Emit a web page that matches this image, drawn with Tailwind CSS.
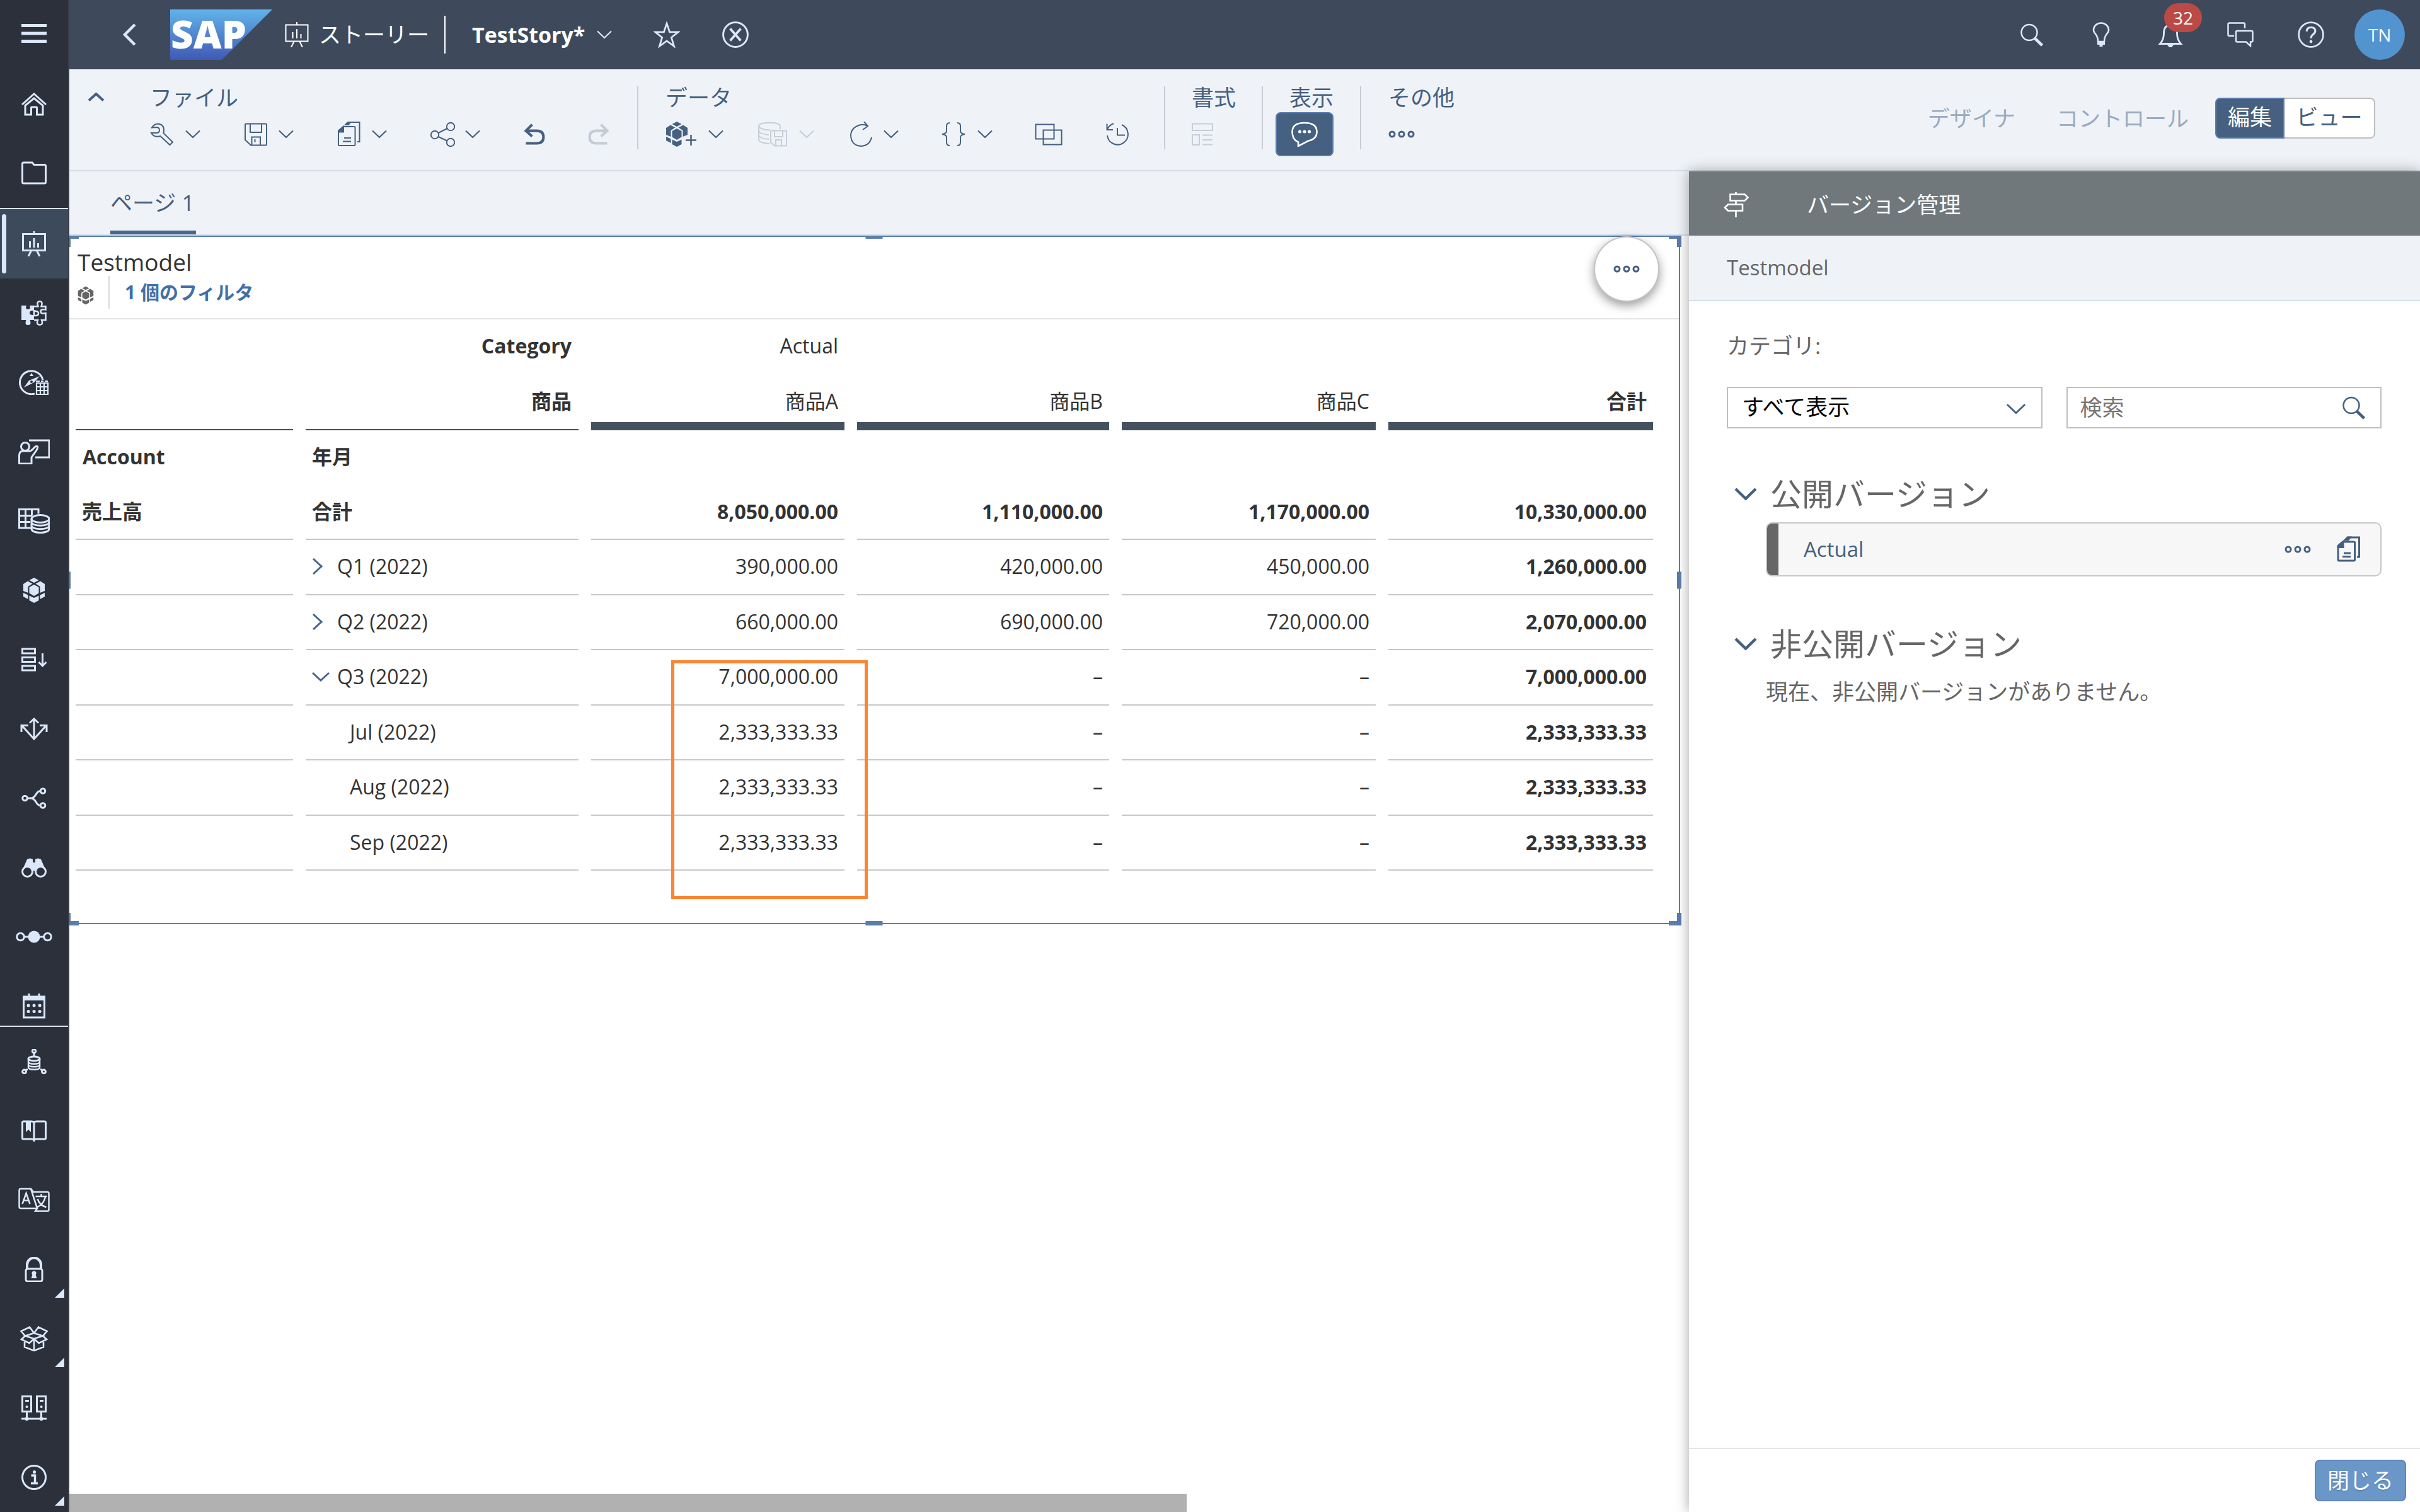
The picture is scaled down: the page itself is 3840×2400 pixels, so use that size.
<!DOCTYPE html>
<html lang="ja">
<head>
<meta charset="utf-8">
<title>TestStory</title>
<script src="https://cdn.jsdelivr.net/npm/@tailwindcss/browser@4"></script>
</head>
<body class="bg-white font-['Open_Sans','Noto_Sans_CJK_JP',sans-serif] text-[#333]">

<svg class="hidden" aria-hidden="true">
  <defs>
    <symbol id="menu" viewBox="0 0 40 40"><path d="M0 5.500h40M0 18h40M0 30.500h40" stroke-width="5"/></symbol>
    <symbol id="home" viewBox="0 0 40 40"><path d="M1 21 20 4l19 17M6 22.500 20 11l14 11.500V37h-9.500V26q0-1-1-1h-7q-1 0-1 1v11H6z"/></symbol>
    <symbol id="folder" viewBox="0 0 40 40"><path d="M1.500 5q0-2 2-2H17l3 3.500h16.500q2 0 2 2V34q0 2-2 2h-33q-2 0-2-2z"/></symbol>
    <symbol id="story" viewBox="0 0 40 40"><path d="M2.500 4.500h35v26h-35zM20 0v4M15.500 31l-4.500 9M24.500 31l4.500 9M13.500 16v10M20 11v15M26.500 19v7"/></symbol>
    <symbol id="puzzle" viewBox="0 0 40 40"><path d="M0 8h8q-2.500 6 2.500 6t2.500-6H20v8h-2q-5 0-5 3.500t5 3.500h2v8h-6.500q3 8-3 8t-3-8H0z" fill="currentColor" stroke="none"/><path d="M20 9.500h6.500q-3-8 2.500-8t2.500 8h7v5q-8-1.500-8 3t8 2.500v11H32q3 7.500-3 7.500t-3-7.500h-6M20 16v8h3q4 0 4-3.500t-4-3.500z" stroke-width="2.500"/></symbol>
    <symbol id="compass" viewBox="0 0 48 40"><path d="M25 38A18.500 18.500 0 1 1 38 16" stroke-width="3"/><path d="M8 28 16 17l17-7-9 10-16 8zM17 10l3-5 3 5z" fill="currentColor" stroke="none"/><circle cx="20" cy="19" r="2" fill="#2b303a" stroke="none"/><path d="M28 21h18v18H28zM34 21v18M40 21v18M28 27h18M28 33h18M27 18h6M35 18h4M41 18h5" stroke-width="2.200"/></symbol>
    <symbol id="teacher" viewBox="0 0 50 40"><path d="M17 2h32v27H27"/><circle cx="11" cy="12" r="6.500"/><path d="M1.500 39V26q0-7 6-7h10q3 0 6-3.500 4-5 6.500-4 2 1.500-1 6L21 29v10z"/></symbol>
    <symbol id="griddb" viewBox="0 0 50 40"><path d="M20 31H1.500V1.500H32v7M1.500 11.500H22M1.500 21.500H19M11.500 1.500V31M21.500 1.500v10"/><ellipse cx="35" cy="16.500" rx="14" ry="6"/><path d="M21 16.500v16c0 8 28 8 28 0v-16M21 22c0 7 28 7 28 0M21 27.500c0 7 28 7 28 0"/></symbol>
    <symbol id="cube" viewBox="0 0 36 40"><g fill="currentColor" stroke="none"><path d="M18 0 25.500 4 18 8 10.500 4zM8 5.500l7.500 4-7 4.500v10L1 21V10zM28 5.500l-7.500 4 7 4.500v10l7.500-3V10zM18 11l7.500 4v9.500L18 29l-7.500-4.500V15zM1 24l7.500 3.500V34L1 30zM35 24l-7.500 3.500V34L35 30zM10.500 28.500 18 32l7.500-3.500V36L18 40l-7.500-4z"/></g></symbol>
    <symbol id="sort" viewBox="0 0 40 40"><path d="M1.500 3h20v7h-20zM1.500 16.500h20v7h-20zM1.500 30h20v7h-20zM33.500 10v19M27.500 24l6 6 6-6"/></symbol>
    <symbol id="arrows" viewBox="0 0 44 40"><path d="M22 4v32M15 10.500 22 4l7 6.500M2 25V14.500h11M42 25V14.500H31M2.500 14.500 22 36l19.500-21.500"/></symbol>
    <symbol id="branch" viewBox="0 0 40 40"><circle cx="5.500" cy="20" r="3.800"/><circle cx="34" cy="8.500" r="3.800"/><circle cx="34" cy="31.500" r="3.800"/><path d="M9.500 20h6c8 0 7-11.500 14.500-11.500M15.500 20c8 0 7 11.500 14.500 11.500"/></symbol>
    <symbol id="binoculars" viewBox="0 0 40 40"><path d="M1.500 24 9 7q5-3 9 0v5h4V7q4-3 9 0l7.500 17-6-4q-9 0-10 5h-5q-1-5-10-5z" fill="currentColor" stroke="none"/><circle cx="9.500" cy="26.500" r="8"/><circle cx="30.500" cy="26.500" r="8"/></symbol>
    <symbol id="flow" viewBox="0 0 58 40"><circle cx="7.500" cy="20" r="5.800"/><circle cx="50.500" cy="20" r="5.800"/><circle cx="29" cy="20" r="9.500" fill="currentColor" stroke="none"/><path d="M14 20h30"/></symbol>
    <symbol id="calendar" viewBox="0 0 40 40"><path d="M3.500 5h33v33h-33zM3.500 8h33M12 0v8M28 0v8"/><path d="M3 4h34v7H3z" fill="currentColor" stroke="none"/><path d="M11 19h.1M20 19h.1M29 19h.1M11 28.500h.1M20 28.500h.1M29 28.500h.1" stroke-width="5" stroke-linecap="round"/></symbol>
    <symbol id="netdb" viewBox="0 0 40 40"><circle cx="20" cy="3.500" r="2.700"/><circle cx="4.500" cy="36" r="2.900"/><circle cx="35.500" cy="36" r="2.900"/><path d="M20 6v6M7 34l3-2M33 34l-3-2"/><ellipse cx="20" cy="15.500" rx="9" ry="3.500"/><path d="M11 15.500V29c0 5 18 5 18 0V15.500M11 20c0 5 18 5 18 0M11 24.500c0 5 18 5 18 0" stroke-width="2.500"/></symbol>
    <symbol id="book" viewBox="0 0 40 40"><path d="M20 35q-1-2-4-2H3q-1.500 0-1.500-1.500V7Q1.500 5 3 5h13q4 0 4 2.500 0-2.500 4-2.500h13q1.500 0 1.500 2v24.500Q38.500 33 37 33H24q-3 0-4 2zM20 7v27"/><path d="M7 5h8v17l-4-4-4 4z" fill="currentColor" stroke="none"/></symbol>
    <symbol id="translate" viewBox="0 0 50 40"><path d="M20 2H4Q1.500 2 1.500 4.500v26Q1.500 33 4 33h26zM20 2l4 5h22q2.500 0 2.500 2.500V35q0 2.500-2.500 2.500H27L30 33M20 2l10 31M6.500 26 12.500 9 18.500 26M8.500 20.500h8M27.500 14h18M36.500 10v4M30.500 18q4 11 14 13M43 15q-3 12-13 16" stroke-width="2.500"/></symbol>
    <symbol id="lock" viewBox="0 0 40 40"><path d="M9 19v-6.500a11 11 0 0 1 22 0V19" stroke-width="4"/><rect x="7" y="19" width="26" height="20" rx="3"/><circle cx="20" cy="26" r="3.500" fill="currentColor" stroke="none"/><path d="M18 27h4l2.500 7h-9z" fill="currentColor" stroke="none"/></symbol>
    <symbol id="box" viewBox="0 0 44 40"><path d="M22 11 8 15.500 22 20l14-4.500zM22 11 15 1.500 1.500 8 8 15.500M22 11l7-9.500L42.500 8 36 15.500M8 15.500 2 21l12.500 6L22 20M36 15.500l6 5.500-12.500 6L22 20M7 25v8l15 6 15-6v-8M22 21v18" stroke-width="2.600"/></symbol>
    <symbol id="servers" viewBox="0 0 40 40"><path d="M1.500 1.500h14v24h-14zM24.500 1.500h14v24h-14zM6 8.500h6M29 8.500h6M8.500 26v10M31.500 26v10M0 37h40"/><path d="M8.500 18h.1M31.500 18h.1" stroke-width="4" stroke-linecap="round"/><path d="M8.500 37h.1M31.500 37h.1" stroke-width="6" stroke-linecap="round"/></symbol>
    <symbol id="info" viewBox="0 0 40 40"><circle cx="20" cy="20" r="18.500"/><path d="M15.500 17h6v11M15 29.500h11" stroke-width="3.500"/><circle cx="20.500" cy="11.500" r="2.600" fill="currentColor" stroke="none"/></symbol>
    <symbol id="corner" viewBox="0 0 15 15"><path d="M15 0v15H0z" fill="currentColor" stroke="none"/></symbol>

    <symbol id="back" viewBox="0 0 22 36"><path d="M20 2 4 18l16 16" stroke-width="4.500"/></symbol>
    <symbol id="down" viewBox="0 0 24 14"><path d="M1 1.500 12 12 23 1.500" stroke-width="2.200"/></symbol>
    <symbol id="downbold" viewBox="0 0 36 20"><path d="M2 2l16 15.500L34 2" stroke-width="4.500"/></symbol>
    <symbol id="star" viewBox="0 0 40 40"><path d="m20 3 4.300 13H37.500L27 24.200 31 37.500 20 29.500 9 37.500l4-13.300L2.500 16h13.200z" stroke-width="2.600"/></symbol>
    <symbol id="close" viewBox="0 0 40 40"><circle cx="20" cy="20" r="18.500" stroke-width="2.800"/><path d="m12 11 16 18M28 11 12 29" stroke-width="3.600"/></symbol>
    <symbol id="search" viewBox="0 0 40 40"><circle cx="16" cy="16.500" r="12.500" stroke-width="2.500"/><path d="m25 26 11.500 11" stroke-width="4.500"/></symbol>
    <symbol id="bulb" viewBox="0 0 40 40"><path d="M15 31q0-7-3.500-11.500Q8 15.500 8 12.500a12 11 0 0 1 24 0q0 3-3.500 7Q25 24 25 31z" stroke-width="2.600"/><path d="M14 30h12v6h-3.500v3h-5v-3H14z" fill="currentColor" stroke="none"/></symbol>
    <symbol id="bell" viewBox="0 0 40 40"><path d="M3.500 34.500Q9.500 28 9.500 18 9.500 5 20 5t10.500 13q0 10 6 16.500z" stroke-width="2.800"/><path d="M14 35h12l-4 5h-4z" fill="currentColor" stroke="none"/></symbol>
    <symbol id="chat" viewBox="0 0 42 40"><path d="M11 22H3.500q-2 0-2-2V3.500q0-2 2-2H26q2 0 2 2V10M16 14h22.500q2 0 2 2v13.500q0 2-2 2H37V38l-7-6.500H16q-2 0-2-2V16q0-2 2-2z" stroke-width="2.500"/></symbol>
    <symbol id="help" viewBox="0 0 40 40"><circle cx="20" cy="20" r="18.500" stroke-width="2.600"/><path d="M13.500 15q0-6 6.500-6t6.500 5.500c0 5-6.500 4.500-6.500 11" stroke-width="3"/><circle cx="20" cy="30.500" r="2.300" fill="currentColor" stroke="none"/></symbol>

    <symbol id="wrench" viewBox="0 0 40 40"><path d="M3 9.500Q7 3.500 13 3.500q9.500 1 9 11.500l-.5 3.500 14.500 14-4.500 4.500-15-14q-10 3-14.500-5h8q5 0 5-4.500T10 9z"/></symbol>
    <symbol id="save" viewBox="0 0 40 40"><path d="M3 5q0-1.500 1.500-1.500h31Q37 3.500 37 5v31q0 1.500-1.500 1.500H12L3 29zM11 3.500V17h18V3.500M13.500 37.500V24.500H27v13M18.500 28v5"/></symbol>
    <symbol id="copy" viewBox="0 0 40 40"><path d="M3 14.500 10.500 8H28q1.500 0 1.500 1.500v27Q29.500 38 28 38H4.500Q3 38 3 36.500zM12 26h11M10 31.500h13M16 3.500 19 1h17.500v31H33"/><path d="M3 15 11 8v8.500H3zM14 5l4-4h4L19 5z" fill="currentColor"/></symbol>
    <symbol id="share" viewBox="0 0 40 40"><circle cx="8" cy="21" r="6.200"/><circle cx="33" cy="8" r="6.200"/><circle cx="33" cy="33" r="6.200"/><path d="M13.500 18 27.500 11M13.500 24l14 6.500"/></symbol>
    <symbol id="undo" viewBox="0 0 40 40"><path d="M4 14h20q12 0 12 11t-12 11H5" stroke-width="4.500"/><path d="M16 3 5 14l11 10" stroke-width="4.500"/></symbol>
    <symbol id="redo" viewBox="0 0 40 40"><path d="M36 14H16Q4 14 4 25t12 11h19" stroke-width="4.500"/><path d="M24 3l11 11-11 10" stroke-width="4.500"/></symbol>
    <symbol id="addcube" viewBox="0 0 50 40"><g fill="currentColor" stroke="none"><path d="M18 0 25.500 4 18 8 10.500 4zM8 5.500l7.500 4-7 4.500v10L1 21V10zM28 5.500l-7.500 4 7 4.500v10l7.500-3V10zM18 11l7.500 4v9.500L18 29l-7.500-4.500V15zM1 24l7.500 3.500V34L1 30zM10.500 28.500 18 32l7.500-3.500V36L18 40l-7.500-4z"/></g><path d="M40.500 21v17M32 29.500h17" stroke-width="2.500"/></symbol>
    <symbol id="dbsave" viewBox="0 0 48 40"><path d="M19 35q-16-1-17-6V7M2 7C2 0 36 0 36 7v5M2 7q2 6 18 6.500M2 15q2 5 16 6M2 22q2 5 16 6"/><path d="M21 16q0-1.500 1.500-1.500h22Q46 14.500 46 16v21q0 1.500-1.500 1.500H27L21 33zM27 14.500V24h13v-9.500M29 38.500V29h9v9.500"/></symbol>
    <symbol id="refresh" viewBox="0 0 40 40"><path d="M30 6.500Q24 3.500 18 5.500 4 10 4 22.500 5 38 20.500 39 34 38 37 25M25 0l6 7-8 6"/></symbol>
    <symbol id="braces" viewBox="0 0 40 40"><path d="M14 2q-5 0-5 5v8q0 4-7 5 7 1 7 5v8q0 5 5 5M26 2q5 0 5 5v8q0 4 7 5-7 1-7 5v8q0 5-5 5"/></symbol>
    <symbol id="overlap" viewBox="0 0 44 40"><path d="M1.500 4.500h29v23h-29zM13.500 13.500h29v23h-29z"/></symbol>
    <symbol id="history" viewBox="0 0 40 40"><path d="M4 22a16.500 16.500 0 1 0 23-17M3.500 3.500V13H13M4 12Q7 6 14 3M20 10v11.500h12"/></symbol>
    <symbol id="layout" viewBox="0 0 34 40"><path d="M1 3.500h32V14H1zM1 21h11v16H1zM17 21.500h16M17 29h16M17 36.500h16"/></symbol>
    <symbol id="comment" viewBox="0 0 42 40"><path d="M11 32.500Q1.500 29 1.500 16 1.500 2 21 2t19.500 14Q40.500 28 27 30.500L11 39z" stroke-width="2.600"/><path d="M13.500 16h.1M21 16h.1M28.500 16h.1" stroke-width="5" stroke-linecap="round"/></symbol>
    <symbol id="dots" viewBox="0 0 42 14"><circle cx="6" cy="7" r="4"/><circle cx="21" cy="7" r="4"/><circle cx="36" cy="7" r="4"/></symbol>
    <symbol id="signpost" viewBox="0 0 40 40"><path d="M10.500 3.500h23l5 5-5 5h-23zM30 19.500H7l-5 5 5 5h23zM19.500 0v3.500M19.500 14v5M19.500 30v10" stroke-width="2.600"/></symbol>
  </defs>
</svg>

<div class="flex h-screen">

  <nav class="flex w-[110px] shrink-0 flex-col border-r-2 border-[#3a3f47] bg-[#2b303a] text-[#dbe8fb]" aria-label="メイン">
    <div class="flex flex-col">
      <button class="flex h-[110px] items-center justify-center" aria-label="メニュー"><svg class="h-10 w-10 fill-none stroke-current"><use href="#menu"/></svg></button>
      <a href="#" class="flex h-[110px] items-center justify-center" aria-label="ホーム"><svg class="h-10 w-10 fill-none stroke-current stroke-3"><use href="#home"/></svg></a>
      <a href="#" class="flex h-[110px] items-center justify-center" aria-label="ファイル"><svg class="h-10 w-10 fill-none stroke-current stroke-3"><use href="#folder"/></svg></a>
    </div>
    <div class="flex min-h-0 flex-1 flex-col overflow-hidden border-y-2 border-[#dbe3ee]">
      <a href="#" class="relative flex h-[110px] shrink-0 items-center justify-center bg-[#3c4a5b]" aria-label="ストーリー"><span class="absolute inset-y-2 left-[3px] w-[7px] rounded-full bg-[#dbe8fb]"></span><svg class="h-10 w-10 fill-none stroke-current stroke-3"><use href="#story"/></svg></a>
      <a href="#" class="flex h-[110px] shrink-0 items-center justify-center" aria-label="アプリケーション"><svg class="h-10 w-10 fill-none stroke-current stroke-3"><use href="#puzzle"/></svg></a>
      <a href="#" class="flex h-[110px] shrink-0 items-center justify-center" aria-label="エクスプローラ"><svg class="h-10 w-12 fill-none stroke-current stroke-3"><use href="#compass"/></svg></a>
      <a href="#" class="flex h-[110px] shrink-0 items-center justify-center" aria-label="ボードルーム"><svg class="h-10 w-[50px] fill-none stroke-current stroke-3"><use href="#teacher"/></svg></a>
      <a href="#" class="flex h-[110px] shrink-0 items-center justify-center" aria-label="データセット"><svg class="h-10 w-[50px] fill-none stroke-current stroke-3"><use href="#griddb"/></svg></a>
      <a href="#" class="flex h-[110px] shrink-0 items-center justify-center" aria-label="モデラ"><svg class="h-10 w-9 fill-none stroke-current stroke-3"><use href="#cube"/></svg></a>
      <a href="#" class="flex h-[110px] shrink-0 items-center justify-center" aria-label="データアクション"><svg class="h-10 w-10 fill-none stroke-current stroke-3"><use href="#sort"/></svg></a>
      <a href="#" class="flex h-[110px] shrink-0 items-center justify-center" aria-label="配賦"><svg class="h-10 w-11 fill-none stroke-current stroke-3"><use href="#arrows"/></svg></a>
      <a href="#" class="flex h-[110px] shrink-0 items-center justify-center" aria-label="プロセス"><svg class="h-10 w-10 fill-none stroke-current stroke-3"><use href="#branch"/></svg></a>
      <a href="#" class="flex h-[110px] shrink-0 items-center justify-center" aria-label="検索"><svg class="h-10 w-10 fill-none stroke-current stroke-3"><use href="#binoculars"/></svg></a>
      <a href="#" class="flex h-[110px] shrink-0 items-center justify-center" aria-label="フロー"><svg class="h-10 w-[58px] fill-none stroke-current stroke-3"><use href="#flow"/></svg></a>
      <a href="#" class="flex h-[110px] shrink-0 items-center justify-center" aria-label="カレンダ"><svg class="h-10 w-10 fill-none stroke-current stroke-3"><use href="#calendar"/></svg></a>
    </div>
    <div class="flex flex-col">
      <a href="#" class="flex h-[110px] items-center justify-center" aria-label="接続"><svg class="h-10 w-10 fill-none stroke-current stroke-3"><use href="#netdb"/></svg></a>
      <a href="#" class="flex h-[110px] items-center justify-center" aria-label="カタログ"><svg class="h-10 w-10 fill-none stroke-current stroke-3"><use href="#book"/></svg></a>
      <a href="#" class="flex h-[110px] items-center justify-center" aria-label="翻訳"><svg class="h-10 w-[50px] fill-none stroke-current stroke-3"><use href="#translate"/></svg></a>
      <a href="#" class="relative flex h-[110px] items-center justify-center" aria-label="セキュリティ"><svg class="h-10 w-10 fill-none stroke-current stroke-3"><use href="#lock"/></svg><svg class="absolute right-1.5 bottom-2.5 h-[15px] w-[15px]"><use href="#corner"/></svg></a>
      <a href="#" class="relative flex h-[110px] items-center justify-center" aria-label="デプロイメント"><svg class="h-10 w-11 fill-none stroke-current stroke-3"><use href="#box"/></svg><svg class="absolute right-1.5 bottom-2.5 h-[15px] w-[15px]"><use href="#corner"/></svg></a>
      <a href="#" class="flex h-[110px] items-center justify-center" aria-label="システム"><svg class="h-10 w-10 fill-none stroke-current stroke-3"><use href="#servers"/></svg></a>
      <a href="#" class="relative flex h-[110px] items-center justify-center" aria-label="情報"><svg class="h-10 w-10 fill-none stroke-current stroke-3"><use href="#info"/></svg><svg class="absolute right-1.5 bottom-2.5 h-[15px] w-[15px]"><use href="#corner"/></svg></a>
    </div>
  </nav>

  <div class="flex min-w-0 flex-1 flex-col">

    <header class="flex h-[110px] shrink-0 items-center bg-[#3e4a5b] pr-6 pl-[84px] text-[#dbe8fb]">
      <button aria-label="戻る"><svg class="h-9 w-[22px] fill-none stroke-current"><use href="#back"/></svg></button>
      <svg class="ml-[54px] h-20 w-[162px]" viewBox="0 0 162 80" role="img" aria-label="SAP">
        <defs><linearGradient id="sapblue" x1="0" y1="0" x2="0" y2="1"><stop offset="0" stop-color="#62b3ea"/><stop offset="1" stop-color="#3f5ab5"/></linearGradient></defs>
        <path d="M0 0h162L82 80H0z" fill="url(#sapblue)"/>
        <text x="1" y="62" font-family="Open Sans" font-weight="800" font-size="62" fill="#fff">SAP</text>
      </svg>
      <div class="ml-[18px] flex items-center gap-[14px] text-white">
        <svg class="h-10 w-[42px] fill-none stroke-current stroke-2"><use href="#story"/></svg>
        <span class="text-[35px] leading-[50px]">ストーリー</span>
      </div>
      <span class="ml-6 h-[60px] w-0.5 bg-white"></span>
      <h1 class="ml-[42px] text-[34px] leading-[50px] font-bold text-white">TestStory*</h1>
      <button class="ml-[19px]" aria-label="ストーリーメニュー"><svg class="h-3.5 w-6 fill-none stroke-current"><use href="#down"/></svg></button>
      <button class="ml-[66px]" aria-label="お気に入り"><svg class="h-[42px] w-[42px] fill-none stroke-current"><use href="#star"/></svg></button>
      <button class="ml-[67px]" aria-label="閉じる"><svg class="h-[42px] w-[42px] fill-none stroke-current"><use href="#close"/></svg></button>
      <div class="ml-auto flex items-center gap-[70px]">
        <button aria-label="検索"><svg class="h-10 w-10 fill-none stroke-current"><use href="#search"/></svg></button>
        <button aria-label="ヒント"><svg class="h-10 w-10 fill-none stroke-current"><use href="#bulb"/></svg></button>
        <button class="relative" aria-label="通知"><svg class="h-10 w-10 fill-none stroke-current"><use href="#bell"/></svg><span class="absolute -top-[30px] left-[10px] flex h-[46px] w-[60px] items-center justify-center rounded-full bg-[#bb4a46] text-[28px] text-white">32</span></button>
        <button aria-label="ディスカッション"><svg class="h-10 w-[42px] fill-none stroke-current"><use href="#chat"/></svg></button>
        <button aria-label="ヘルプ"><svg class="h-[42px] w-[42px] fill-none stroke-current"><use href="#help"/></svg></button>
        <button class="-ml-[22px] flex h-20 w-20 items-center justify-center rounded-full bg-[#5294d0] text-[28px] text-white">TN</button>
      </div>
    </header>

    <div class="flex h-[162px] shrink-0 border-b-2 border-[#d9dde3] bg-[#eff3f8] pt-[27px] text-[35px] leading-9 text-[#456080]" role="toolbar" aria-label="ツールバー">
      <button class="mt-2.5 ml-[29px] h-3.5 w-[27px]" aria-label="折りたたむ"><svg class="h-3.5 w-[27px] rotate-180 fill-none stroke-current stroke-4" viewBox="0 0 27 14"><path d="M2 1.500 13.500 12 25 1.500"/></svg></button>
      <div class="ml-[72px] flex flex-col gap-[5px]">
        <div>ファイル</div>
        <div class="flex h-[70px] items-center gap-[68px]">
          <button class="flex items-center gap-4" aria-label="設定"><svg class="h-10 w-10 fill-none stroke-current stroke-2"><use href="#wrench"/></svg><svg class="h-3.5 w-6 fill-none stroke-current"><use href="#down"/></svg></button>
          <button class="flex items-center gap-4" aria-label="保存"><svg class="h-10 w-10 fill-none stroke-current stroke-2"><use href="#save"/></svg><svg class="h-3.5 w-6 fill-none stroke-current"><use href="#down"/></svg></button>
          <button class="flex items-center gap-4" aria-label="コピー"><svg class="h-10 w-10 fill-none stroke-current stroke-2"><use href="#copy"/></svg><svg class="h-3.5 w-6 fill-none stroke-current"><use href="#down"/></svg></button>
          <button class="flex items-center gap-4" aria-label="共有"><svg class="h-10 w-10 fill-none stroke-current stroke-2"><use href="#share"/></svg><svg class="h-3.5 w-6 fill-none stroke-current"><use href="#down"/></svg></button>
          <div class="flex items-center gap-[66px]">
            <button aria-label="元に戻す"><svg class="h-10 w-9 fill-none stroke-current"><use href="#undo"/></svg></button>
            <button class="text-[#c3ccd6]" aria-label="やり直し" disabled><svg class="h-10 w-9 fill-none stroke-current"><use href="#redo"/></svg></button>
          </div>
        </div>
      </div>
      <span class="ml-[43px] h-[100px] w-0.5 bg-[#c9ced6]"></span>
      <div class="ml-[43px] flex flex-col gap-[5px]">
        <div>データ</div>
        <div class="flex h-[70px] items-center gap-[54px]">
          <button class="flex items-center gap-[18px]" aria-label="データ追加"><svg class="h-10 w-[50px] fill-none stroke-current stroke-2"><use href="#addcube"/></svg><svg class="h-3.5 w-6 fill-none stroke-current"><use href="#down"/></svg></button>
          <button class="flex items-center gap-[18px] text-[#c6ced8]" aria-label="データ保存" disabled><svg class="h-10 w-12 fill-none stroke-current stroke-2"><use href="#dbsave"/></svg><svg class="h-3.5 w-6 fill-none stroke-current"><use href="#down"/></svg></button>
          <div class="flex items-center gap-[67px]">
            <button class="flex items-center gap-4" aria-label="更新"><svg class="h-10 w-10 fill-none stroke-current stroke-2"><use href="#refresh"/></svg><svg class="h-3.5 w-6 fill-none stroke-current"><use href="#down"/></svg></button>
            <button class="flex items-center gap-[18px]" aria-label="変数"><svg class="h-10 w-10 fill-none stroke-current stroke-2"><use href="#braces"/></svg><svg class="h-3.5 w-6 fill-none stroke-current"><use href="#down"/></svg></button>
            <button aria-label="ブレンド"><svg class="h-10 w-11 fill-none stroke-current stroke-2"><use href="#overlap"/></svg></button>
            <button aria-label="履歴"><svg class="h-10 w-10 fill-none stroke-current stroke-2"><use href="#history"/></svg></button>
          </div>
        </div>
      </div>
      <span class="ml-[54px] h-[100px] w-0.5 bg-[#c9ced6]"></span>
      <div class="ml-[42px] flex flex-col gap-[5px]">
        <div>書式</div>
        <div class="flex h-[70px] items-center"><button class="text-[#c6ced8]" aria-label="レイアウト" disabled><svg class="h-10 w-[34px] fill-none stroke-current stroke-2"><use href="#layout"/></svg></button></div>
      </div>
      <span class="ml-[41px] h-[100px] w-0.5 bg-[#c9ced6]"></span>
      <div class="ml-[20px] flex flex-col gap-[5px]">
        <div class="pl-[22px]">表示</div>
        <button class="flex h-[70px] w-[92px] items-center justify-center rounded-lg border-2 border-[#5b7dac] bg-[#456080] text-white" aria-label="コメント"><svg class="h-10 w-[42px] fill-none stroke-current"><use href="#comment"/></svg></button>
      </div>
      <span class="ml-[42px] h-[100px] w-0.5 bg-[#c9ced6]"></span>
      <div class="ml-[43px] flex flex-col gap-[5px]">
        <div>その他</div>
        <div class="flex h-[70px] items-center"><button aria-label="その他"><svg class="h-3.5 w-[42px] fill-none stroke-current stroke-3"><use href="#dots"/></svg></button></div>
      </div>
      <div class="mt-[18px] mr-[71px] ml-auto flex h-[65px] items-center">
        <button class="text-[#9aabbf]" disabled>デザイナ</button>
        <button class="ml-[65px] text-[#9aabbf]" disabled>コントロール</button>
        <div class="ml-[42px] flex h-full">
          <button class="w-[110px] rounded-l-lg border-2 border-[#5b7dac] bg-[#456080] pb-1 text-white">編集</button>
          <button class="w-[144px] rounded-r-lg border-2 border-l-0 border-[#bfbfbf] bg-white pb-1">ビュー</button>
        </div>
      </div>
    </div>

    <div class="flex min-h-0 flex-1">

      <main class="flex min-w-0 flex-1 flex-col">
        <div class="flex h-[102px] shrink-0 items-end border-b-2 border-[#d1e0ee] bg-[#eff3f8] pl-[65px]">
          <a href="#" class="h-[74px] min-w-[136px] border-b-6 border-[#4a6587] text-[35px] leading-[48px] text-[#456080]">ページ 1</a>
        </div>

        <section class="relative mr-3.5 h-[1093px] border-y-2 border-r-2 border-[#5b7dac]">
          <div class="flex flex-col border-b-2 border-[#e5e5e5] pt-[18px] pb-[15px] pl-[13px]">
            <h2 class="text-[37px] leading-11">Testmodel</h2>
            <div class="flex h-[52px] items-center">
              <svg class="mt-2.5 h-[30px] w-[26px] text-[#666]"><use href="#cube"/></svg>
              <span class="ml-[23px] h-full w-0.5 bg-[#d9d9d9]"></span>
              <a href="#" class="ml-6 text-[30px] leading-[52px] font-bold text-[#426fa8]">1 個のフィルタ</a>
            </div>
          </div>

          <div class="-ml-2.5 pr-[21px]">
          <table class="w-full table-fixed border-separate border-spacing-x-5 border-spacing-y-0 text-right text-[32px] leading-[66px] whitespace-nowrap">
            <colgroup><col class="w-[345px]"><col class="w-[433px]"><col class="w-[402px]"><col class="w-[400px]"><col class="w-[403px]"><col></colgroup>
            <thead>
              <tr class="h-[88px] align-top">
                <td></td><th class="px-[11px] pt-[9px]">Category</th><th class="px-[10px] pt-[9px] font-normal">Actual</th><td></td><td></td><td></td>
              </tr>
              <tr class="h-[88px] align-top">
                <td class="border-b-2 border-[#4b4f5d]"></td><th class="border-b-2 border-[#4b4f5d] px-[11px] pt-[9px]">商品</th>
                <th class="border-b-[13px] border-[#46515f] px-[10px] pt-[9px] font-normal">商品A</th>
                <th class="border-b-[13px] border-[#46515f] px-[10px] pt-[9px] font-normal">商品B</th>
                <th class="border-b-[13px] border-[#46515f] px-[10px] pt-[9px] font-normal">商品C</th>
                <th class="border-b-[13px] border-[#46515f] px-[10px] pt-[9px]">合計</th>
              </tr>
              <tr class="h-[87px] align-top">
                <th class="px-[11px] pt-[9px] text-left">Account</th><th class="px-[10px] pt-[9px] text-left">年月</th><td></td><td></td><td></td><td></td>
              </tr>
            </thead>
            <tbody class="align-top *:odd:h-[87px] *:even:h-[88px] [&_td]:border-b-2 [&_td]:border-[#c8c8c8] [&_td]:px-[10px] [&_td]:pt-[9px] [&_th]:border-b-2 [&_th]:border-[#c8c8c8] [&_th]:px-[10px] [&_th]:pt-[9px] [&_th]:text-left">
              <tr><th>売上高</th><th>合計</th><td class="font-bold">8,050,000.00</td><td class="font-bold">1,110,000.00</td><td class="font-bold">1,170,000.00</td><td class="font-bold">10,330,000.00</td></tr>
              <tr><td></td><th class="font-normal"><button class="flex items-center gap-3"><svg class="h-[26px] w-7 fill-none stroke-[#456591] stroke-3" viewBox="0 0 28 26"><path d="m2 1 13 12L2 25"/></svg>Q1 (2022)</button></th><td>390,000.00</td><td>420,000.00</td><td>450,000.00</td><td class="font-bold">1,260,000.00</td></tr>
              <tr><td></td><th class="font-normal"><button class="flex items-center gap-3"><svg class="h-[26px] w-7 fill-none stroke-[#456591] stroke-3" viewBox="0 0 28 26"><path d="m2 1 13 12L2 25"/></svg>Q2 (2022)</button></th><td>660,000.00</td><td>690,000.00</td><td>720,000.00</td><td class="font-bold">2,070,000.00</td></tr>
              <tr><td></td><th class="font-normal"><button class="flex items-center gap-3"><svg class="h-[26px] w-7 fill-none stroke-[#456591] stroke-3" viewBox="0 0 28 26"><path d="m1 7 13 12L27 7"/></svg>Q3 (2022)</button></th><td>7,000,000.00</td><td>–</td><td>–</td><td class="font-bold">7,000,000.00</td></tr>
              <tr><td></td><th class="font-normal"><span class="pl-[60px]">Jul (2022)</span></th><td>2,333,333.33</td><td>–</td><td>–</td><td class="font-bold">2,333,333.33</td></tr>
              <tr><td></td><th class="font-normal"><span class="pl-[60px]">Aug (2022)</span></th><td>2,333,333.33</td><td>–</td><td>–</td><td class="font-bold">2,333,333.33</td></tr>
              <tr><td></td><th class="font-normal"><span class="pl-[60px]">Sep (2022)</span></th><td>2,333,333.33</td><td>–</td><td>–</td><td class="font-bold">2,333,333.33</td></tr>
            </tbody>
          </table>
          </div>

          <div class="absolute top-[672px] left-[955px] h-[379px] w-[312px] border-5 border-[#fa8532]"></div>
          <button class="absolute -top-px right-[31px] flex h-[104px] w-[104px] items-center justify-center rounded-full border-2 border-[#c4c4c4] bg-white text-[#456080] shadow-[0_6px_16px_rgba(0,0,0,0.4)]" aria-label="その他のアクション"><svg class="h-3.5 w-[42px] fill-none stroke-current stroke-3"><use href="#dots"/></svg></button>

          <span class="absolute -top-0.5 left-0 h-[5px] w-[15px] bg-[#5b7dac]"></span>
          <span class="absolute top-0 left-0 h-4 w-0.5 bg-[#5b7dac]"></span>
          <span class="absolute -top-0.5 left-1/2 h-[5px] w-[27px] -translate-x-1/2 bg-[#5b7dac]"></span>
          <span class="absolute -top-0.5 -right-1 h-[18px] w-[20px] border-t-5 border-r-7 border-[#5b7dac]"></span>
          <span class="absolute top-1/2 left-0 h-[27px] w-0.5 -translate-y-1/2 bg-[#5b7dac]"></span>
          <span class="absolute top-1/2 -right-1 h-[27px] w-[7px] -translate-y-1/2 bg-[#5b7dac]"></span>
          <span class="absolute bottom-0 left-0 h-4 w-0.5 bg-[#5b7dac]"></span>
          <span class="absolute -bottom-1 left-0 h-[7px] w-[15px] bg-[#5b7dac]"></span>
          <span class="absolute -bottom-1 left-1/2 h-[7px] w-[27px] -translate-x-1/2 bg-[#5b7dac]"></span>
          <span class="absolute -right-1 -bottom-1 h-[20px] w-[20px] border-r-7 border-b-7 border-[#5b7dac]"></span>
        </section>

        <div class="mt-auto h-[29px] w-[69%] shrink-0 bg-[#b1b1b1]"></div>
      </main>

      <aside class="relative z-10 flex w-[1160px] shrink-0 flex-col bg-white text-[35px] leading-[50px] text-[#666] shadow-[0_0_20px_rgba(0,0,0,0.35)]">
        <header class="flex h-[102px] shrink-0 items-center gap-[92px] bg-[#70787c] pt-1 pl-[55px] text-white">
          <svg class="h-10 w-10 fill-none stroke-current"><use href="#signpost"/></svg>
          <h2>バージョン管理</h2>
        </header>
        <div class="h-[104px] shrink-0 border-b-2 border-[#d1e0ee] bg-[#eff3f8] pl-[60px] text-[33px] leading-[102px]">Testmodel</div>
        <div class="flex flex-1 flex-col pr-[61px] pl-[60px]">
          <label for="category" class="mt-[46px]">カテゴリ:</label>
          <div class="mt-10 grid grid-cols-2 gap-[38px]">
            <div class="relative">
              <select id="category" class="h-[66px] w-full appearance-none border-2 border-[#bfbfbf] bg-white pb-0.5 pl-[22px] text-black"><option>すべて表示</option></select>
              <svg class="pointer-events-none absolute top-[26px] right-[26px] h-[18px] w-8 fill-none stroke-[#456080]"><use href="#down"/></svg>
            </div>
            <div class="relative">
              <input type="search" aria-label="検索" placeholder="検索" class="h-[66px] w-full appearance-none border-2 border-[#bfbfbf] bg-white pb-0.5 pl-5 placeholder:text-[#757575]">
              <svg class="pointer-events-none absolute top-[13px] right-6 h-10 w-10 fill-none stroke-[#456080]"><use href="#search"/></svg>
            </div>
          </div>

          <h3 class="mt-[69px] text-[50px] leading-[70px]"><button class="flex items-center gap-[21px] pl-3"><svg class="h-5 w-9 fill-none stroke-[#456080]"><use href="#downbold"/></svg>公開バージョン</button></h3>
          <div class="mt-2.5 ml-[62px] flex h-[86px] items-center overflow-hidden rounded-[10px] border-2 border-[#c8c8c8] bg-[#f7f7f7] pr-[30px] text-[#456080]">
            <span class="h-full w-[18px] bg-[#666]"></span>
            <span class="ml-[40px] text-[33px]">Actual</span>
            <button class="ml-auto" aria-label="その他"><svg class="h-3.5 w-[42px] fill-none stroke-current stroke-3"><use href="#dots"/></svg></button>
            <button class="ml-[40px]" aria-label="コピー"><svg class="h-11 w-10 fill-none stroke-current stroke-3"><use href="#copy"/></svg></button>
          </div>

          <h3 class="mt-[72px] text-[50px] leading-[70px]"><button class="flex items-center gap-[21px] pl-3"><svg class="h-5 w-9 fill-none stroke-[#456080]"><use href="#downbold"/></svg>非公開バージョン</button></h3>
          <p class="mt-4 ml-[62px]">現在、非公開バージョンがありません。</p>
        </div>
        <footer class="flex h-[102px] shrink-0 items-center justify-end border-t-2 border-[#e5e5e5] pr-[22px]">
          <button class="h-[66px] rounded-lg border-2 border-[#5f86bd] bg-[#6a96c8] px-[18px] text-white text-shadow-sm">閉じる</button>
        </footer>
      </aside>
    </div>
  </div>
</div>
</body>
</html>
